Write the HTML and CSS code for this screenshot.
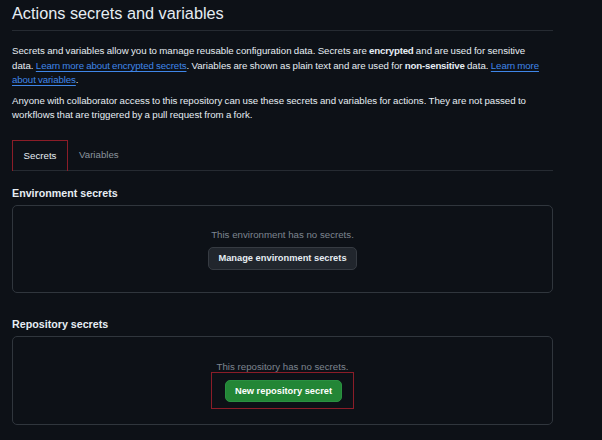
FILE: index.html
```html
<!DOCTYPE html>
<html>
<head>
  <title>Actions secrets and variables</title>
  <link rel="stylesheet" href="styles.css">
</head>
<body>
  <div class="page">
    <h2 class="title">Actions secrets and variables</h2>
    <p class="intro">Secrets and variables allow you to manage reusable configuration data. Secrets are <b>encrypted</b> and are used for sensitive data. <a href="#">Learn more about encrypted secrets</a>. Variables are shown as plain text and are used for <b class="nowrap">non-sensitive</b> data. <a href="#">Learn more about variables</a>.</p>
    <p class="intro">Anyone with collaborator access to this repository can use these secrets and variables for actions. They are not passed to workflows that are triggered by a pull request from a fork.</p>

    <div class="tabs">
      <a class="tab selected" href="#">Secrets</a>
      <a class="tab" href="#">Variables</a>
    </div>

    <h3 class="subhead">Environment secrets</h3>
    <div class="blank">
      <p class="blank-text">This environment has no secrets.</p>
      <button class="btn">Manage environment secrets</button>
    </div>

    <h3 class="subhead">Repository secrets</h3>
    <div class="blank blank-marked">
      <p class="blank-text">This repository has no secrets.</p>
      <span class="marked-btn"><button class="btn btn-primary">New repository secret</button></span>
    </div>
  </div>
</body>
</html>
```

FILE: styles.css
```css
body, html {
  margin: 0;
  padding: 0;
  background-color: #0d1117;
  color: #e6edf3;
  font-family: "Liberation Sans", Arial, sans-serif;
  overflow: hidden;
}
.page {
  width: 541px;
  padding-left: 12px;
}
.title {
  margin: 0;
  padding-top: 2px;
  padding-bottom: 6px;
  font-size: 16.3px;
  font-weight: 400;
  line-height: 22px;
  border-bottom: 1px solid #262b32;
}
.intro {
  margin: 13px 10px 0 0;
  font-size: 9.7px;
  line-height: 14.6px;
  word-spacing: -0.4px;
}
.intro + .intro {
  margin-top: 6px;
}
.intro b {
  font-weight: 700;
  letter-spacing: -0.2px;
}
.nowrap {
  white-space: nowrap;
}
.intro a {
  color: #3f86e8;
  letter-spacing: -0.1px;
  text-decoration: underline;
  text-underline-offset: 2px;
}
.tabs {
  display: flex;
  margin-top: 17px;
  border-bottom: 1px solid #262b32;
}
.tab {
  display: block;
  padding: 0 11px;
  height: 30px;
  line-height: 30px;
  font-size: 9.7px;
  color: #8b949e;
  text-decoration: none;
}
.tab.selected {
  box-sizing: border-box;
  width: 56px;
  height: 31px;
  margin-bottom: -1px;
  padding: 0;
  text-align: center;
  color: #e6edf3;
  border: 1px solid #8b1d28;
  border-bottom: none;
}
.subhead {
  margin: 14px 0 4px 0;
  font-size: 10.7px;
  font-weight: 700;
  line-height: 16px;
}
.blank {
  border: 1px solid #30363d;
  border-radius: 5px;
  height: 86px;
  display: flex;
  flex-direction: column;
  align-items: center;
  justify-content: center;
}
.blank + .subhead {
  margin-top: 23px;
}
.blank-text {
  margin: 0 0 5px 0;
  font-size: 9.7px;
  line-height: 14px;
  color: #7d8590;
}
.btn {
  height: 23px;
  padding: 0 9px;
  font-family: inherit;
  font-size: 9.3px;
  font-weight: 700;
  color: #e6edf3;
  background-color: #21262d;
  border: 1px solid #363b42;
  border-radius: 5px;
}
.btn-primary {
  height: 22px;
  color: #ffffff;
  background-color: #238636;
  border-color: #2a9141;
}
.blank-marked {
  box-sizing: border-box;
  height: 89px;
  padding-top: 8px;
}
.blank-marked .blank-text {
  margin-bottom: -2px;
}
.marked-btn {
  display: block;
  padding: 7px 11px 6px 13px;
  border: 1px solid #8b1d28;
}
```
